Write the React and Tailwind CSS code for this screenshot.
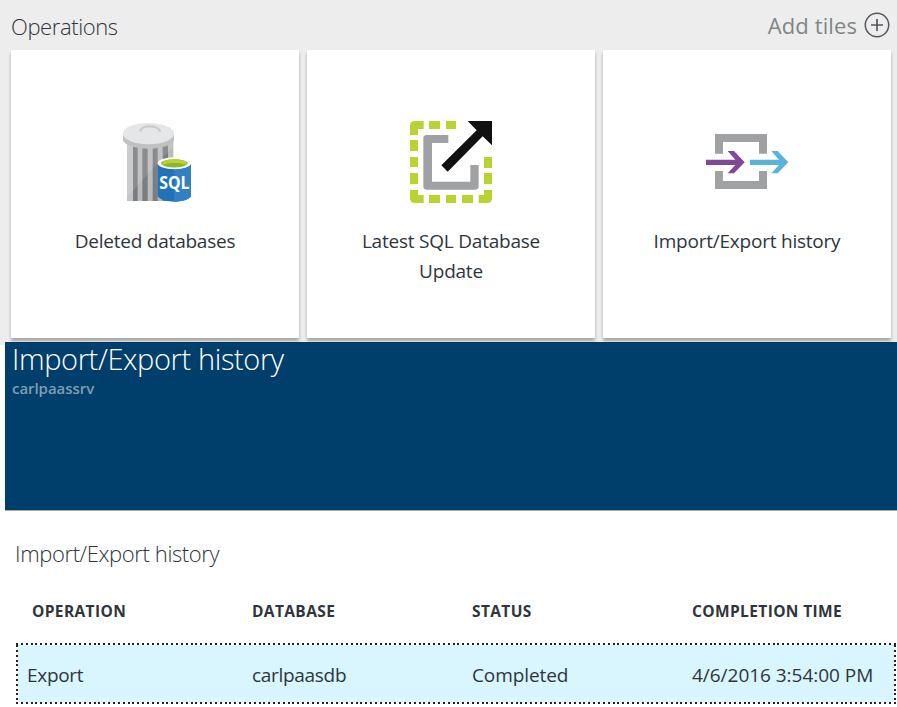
import React from 'react';

const FONT = "font-['Open_Sans','Noto_Sans',sans-serif]";

function TrashSqlIcon() {
  return (
    <svg className="ml-[10px] block" width="100" height="100" viewBox="0 0 300 300">
      <path d="M51 90H190V273H51Z" fill="#b9bbbd" />
      <path d="M51 90H69V273H51Z" fill="#c3c5c7" />
      <path d="M69 100H83V273H69ZM97 100H113V273H97ZM128 100H143V273H128ZM158 100H174V273H158Z" fill="#7b7d80" />
      <path d="M51 90H190V108L51 262Z" fill="#fff" opacity=".12" />
      <path d="M39 72V88C39 104 72 116 115 116S192 104 192 88V72Z" fill="#bfc1c3" />
      <ellipse cx="115.500" cy="71" rx="76.500" ry="32" fill="#e5e6e7" />
      <path d="M91 65C92 44 146 44 150 65" fill="none" stroke="#c9cbcd" strokeWidth="7" />
      <path d="M143 160V256C143 267 165 275 193 275S243 267 243 256V160Z" fill="#2272b9" />
      <path d="M193 160H243V256C243 267 222 275 193 275Z" fill="#3080c3" />
      <ellipse cx="193" cy="160" rx="50" ry="18" fill="#fff" />
      <ellipse cx="193" cy="160" rx="40" ry="12.500" fill="#8cb82b" />
      <path d="M158 165C146 143 241 143 229 165C211 157 176 157 158 165Z" fill="#b8d432" />
      <text x="193" y="236" textAnchor="middle" textLength="91" lengthAdjust="spacingAndGlyphs" fontSize="52" fontWeight="700" fill="#fff">SQL</text>
    </svg>
  );
}

function UpdateIcon() {
  return (
    <svg className="-ml-[2px] block" width="100" height="100" viewBox="0 0 300 300">
      <path
        d="M30 75V47Q30 33 44 33H71V57H54V75ZM87 33H120V57H87ZM138 33H168V57H138ZM30 90H54V123H30ZM30 141H54V171H30ZM30 189H54V222H30ZM30 240H54V255H71V279H44Q30 279 30 265ZM87 255H120V279H87ZM138 255H168V279H138ZM186 255H219V279H186ZM252 240H276V265Q276 279 262 279H236V255H252ZM252 141H276V174H252ZM252 189H276V222H252Z"
        fill="#b8d432"
      />
      <path d="M145 75V99H96V215H211V165H236V229Q236 239 226 239H80Q70 239 70 229V85Q70 75 80 75Z" fill="#a0a1a2" />
      <path d="M203 33H276V106L248 79L143 185L124 166L230 61Z" fill="#111" />
    </svg>
  );
}

function ImportExportIcon() {
  return (
    <svg className="block" width="100" height="80" viewBox="0 0 300 240">
      <path d="M54 42H210V101H186V66H78V101H54ZM54 153H78V183H186V153H210V207H54Z" fill="#a0a1a2" />
      <path d="M27 119H115L92 93H111L143 127L111 160H92L115 135H27Z" fill="#804998" />
      <path d="M159 119H246L223 93H242L274 127L242 160H223L246 135H159Z" fill="#59b4d9" />
    </svg>
  );
}

function Tile({ icon, children }) {
  return (
    <div className="flex h-72 w-72 shrink-0 flex-col items-center bg-white shadow-[0_3px_3px_0_rgba(0,0,0,0.3)]">
      <div className="mt-[60px] flex h-[100px] items-center">{icon}</div>
      <div className="mt-4 text-center text-[19px] leading-[30px] tracking-[-0.22px] whitespace-nowrap text-[#2f353d]">{children}</div>
    </div>
  );
}

function DottedLine({ vertical }) {
  return vertical ? (
    <div className="w-[2px] bg-[repeating-linear-gradient(to_bottom,#222_0_2px,#fff_2px_4.85px)]" />
  ) : (
    <div className="h-[2px] bg-[repeating-linear-gradient(to_right,#222_0_2px,#fff_2px_4.85px)]" />
  );
}

export default function App() {
  return (
    <div className={`h-[707px] w-[897px] overflow-hidden bg-white ${FONT}`}>
      <section className="h-[345px] bg-[#ededed] px-[11px]">
        <header className="flex h-[50px] items-center justify-between">
          <h2 className="mt-[2px] text-[22px] font-light tracking-[-0.4px] text-[#2f353d]">Operations</h2>
          <div className="-mr-[4px] flex items-center text-[22px] tracking-[0.1px] text-[#7f8686]">
            <span>Add tiles</span>
            <svg className="ml-[7px]" width="26" height="26" viewBox="0 0 26 26" fill="none" stroke="#54575f" strokeWidth="1.500">
              <circle cx="13" cy="13" r="11.700" />
              <path d="M13 7V19M7 13H19" strokeWidth="1.700" />
            </svg>
          </div>
        </header>
        <div className="flex gap-2">
          <Tile icon={<TrashSqlIcon />}>Deleted databases</Tile>
          <Tile icon={<UpdateIcon />}>Latest SQL Database<br />Update</Tile>
          <Tile icon={<ImportExportIcon />}>Import/Export history</Tile>
        </div>
      </section>
      <section className="relative -mt-[3px] ml-[5px] h-[169px] border-b border-[#aaa] bg-[#003e6c] pl-[7px]">
        <h1 className="text-[29px] leading-[34px] font-light tracking-[-0.38px] text-white">Import/Export history</h1>
        <p className="mt-[2px] text-[15px] leading-5 font-semibold tracking-[-0.05px] text-[#7f9eb5]">carlpaassrv</p>
      </section>
      <section className="pl-[15px]">
        <h2 className="pt-[26px] text-[22px] leading-8 font-light tracking-[-0.38px] text-[#2f353d]">Import/Export history</h2>
        <div className="mt-8 grid h-5 grid-cols-[220px_220px_220px_1fr] pl-[17px] text-[15.5px] leading-5 font-bold tracking-[0.38px] text-[#2f353d]">
          <span>OPERATION</span>
          <span>DATABASE</span>
          <span>STATUS</span>
          <span>COMPLETION TIME</span>
        </div>
        <div className="mt-[22px] ml-[1px] flex h-[61px] w-[880px] flex-col bg-[#d9f5fe]">
          <DottedLine />
          <div className="flex h-[57px]">
            <DottedLine vertical />
            <div className="grid flex-1 grid-cols-[225px_220px_220px_1fr] items-center pt-1 pl-[9px] text-[19px] tracking-[-0.3px] whitespace-nowrap text-[#2f353d]">
              <span>Export</span>
              <span>carlpaasdb</span>
              <span className="tracking-[-0.1px]">Completed</span>
              <span className="tracking-[-0.03px]">4/6/2016 3:54:00 PM</span>
            </div>
            <DottedLine vertical />
          </div>
          <DottedLine />
        </div>
      </section>
    </div>
  );
}
